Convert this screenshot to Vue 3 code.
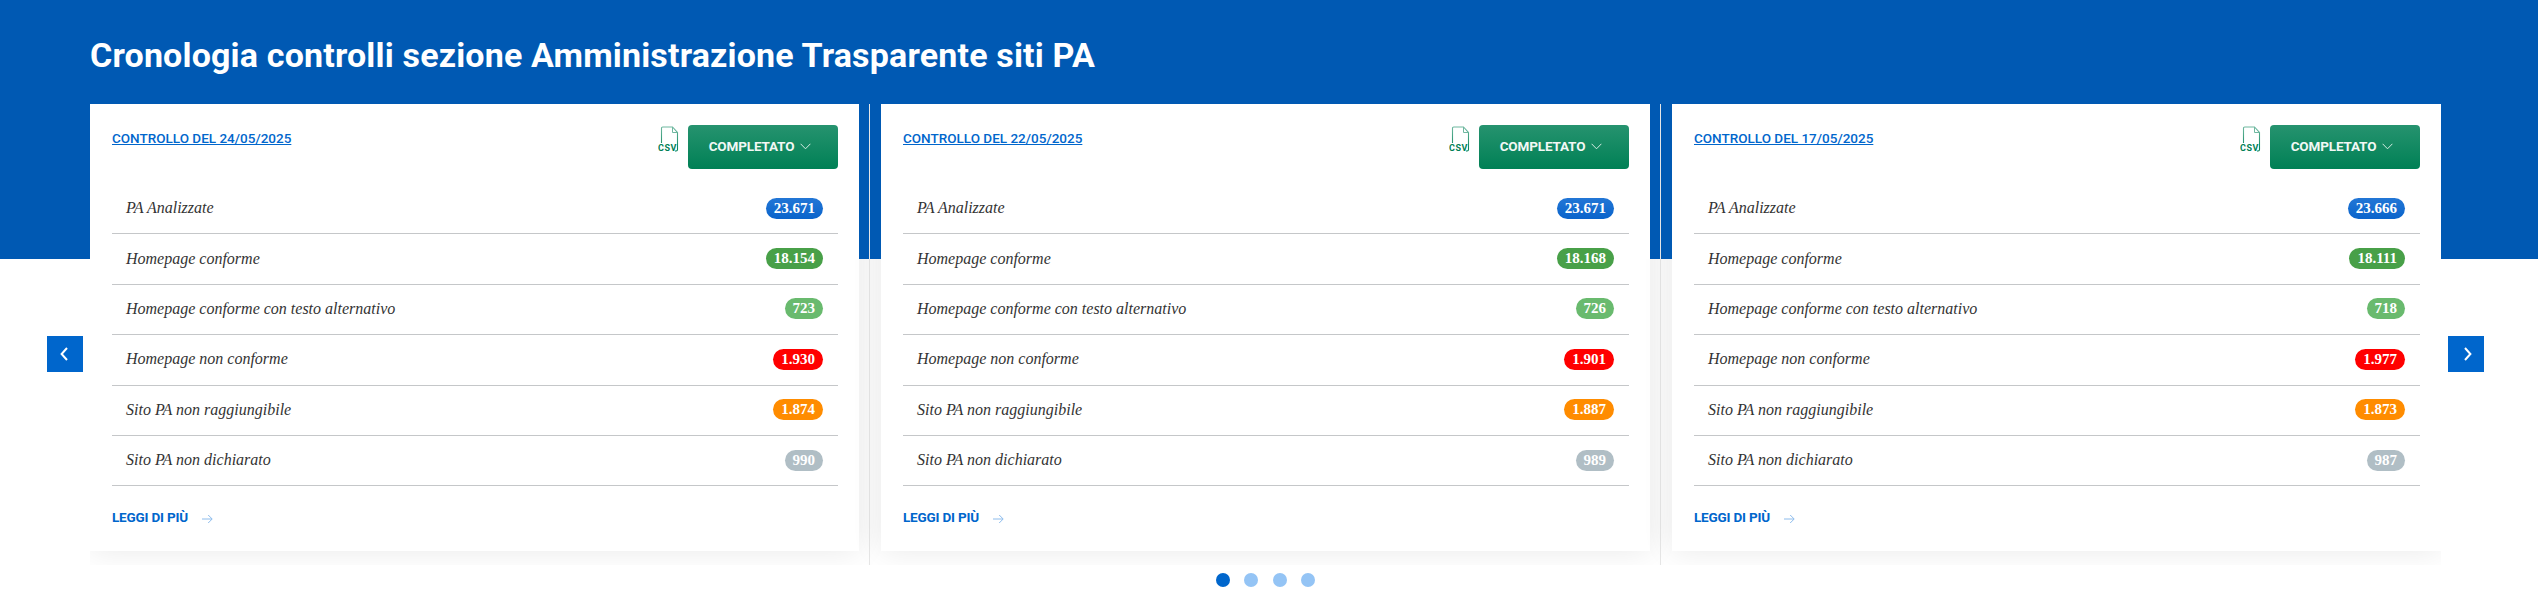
<script setup>
const makeRows = (v) => [
  { label: 'PA Analizzate', value: v[0], tone: 'blue' },
  { label: 'Homepage conforme', value: v[1], tone: 'green' },
  { label: 'Homepage conforme con testo alternativo', value: v[2], tone: 'lime' },
  { label: 'Homepage non conforme', value: v[3], tone: 'red' },
  { label: 'Sito PA non raggiungibile', value: v[4], tone: 'orange' },
  { label: 'Sito PA non dichiarato', value: v[5], tone: 'grey' },
]
const cards = [
  { date: '24/05/2025', rows: makeRows(['23.671', '18.154', '723', '1.930', '1.874', '990']) },
  { date: '22/05/2025', rows: makeRows(['23.671', '18.168', '726', '1.901', '1.887', '989']) },
  { date: '17/05/2025', rows: makeRows(['23.666', '18.111', '718', '1.977', '1.873', '987']) },
]
</script>

<template>
  <main class="page">
    <h1 class="title">Cronologia controlli sezione Amministrazione Trasparente siti PA</h1>
    <div class="viewport">
      <div class="track">
        <article v-for="card in cards" :key="card.date" class="slide">
          <div class="card">
            <header class="head">
              <a class="date" href="#">CONTROLLO DEL {{ card.date }}</a>
              <div class="actions">
                <svg class="csv" width="21" height="26" viewBox="0 0 21 26" fill="none">
                  <defs>
                    <linearGradient id="csvg" x1="0" y1="0" x2="0" y2="1">
                      <stop offset="0" stop-color="#6fb8a0" />
                      <stop offset="1" stop-color="#008055" />
                    </linearGradient>
                  </defs>
                  <path d="M3.5 17V2.2Q3.5 1 4.7 1H14.5L19.5 6.5V23.5Q19.5 25 18 25H17" stroke="url(#csvg)" stroke-width="1.1" />
                  <path d="M14.5 1V6.5H19.5" stroke="#6fb8a0" stroke-width="1" />
                  <text x="0" y="25" class="csv-text">CSV</text>
                </svg>
                <button class="status" type="button">
                  COMPLETATO
                  <svg width="11" height="7" viewBox="0 0 11 7" fill="none"><path d="M.6.8 5.5 5.8 10.4.8" stroke="#d5ebe2" stroke-width="1" /></svg>
                </button>
              </div>
            </header>
            <ul class="rows">
              <li v-for="row in card.rows" :key="row.label" class="row">
                <span class="label">{{ row.label }}</span>
                <span class="badge" :class="row.tone">{{ row.value }}</span>
              </li>
            </ul>
            <a class="more" href="#">
              LEGGI DI PIÙ
              <svg class="arrow" width="11" height="10" viewBox="0 0 11 10" fill="none"><path d="M0 5H10M6.2 1 10.2 5 6.2 9" stroke="#8dbcec" stroke-width="1" /></svg>
            </a>
          </div>
        </article>
      </div>
    </div>
    <div class="dots">
      <span class="dot on"></span><span class="dot"></span><span class="dot"></span><span class="dot"></span>
    </div>
    <button class="nav prev" type="button" aria-label="Precedente">
      <svg width="10" height="14" viewBox="0 0 10 14" fill="none"><path d="M8 1 2.6 7 8 13" stroke="#fff" stroke-width="2" /></svg>
    </button>
    <button class="nav next" type="button" aria-label="Successivo">
      <svg width="10" height="14" viewBox="0 0 10 14" fill="none"><path d="M2 1 7.4 7 2 13" stroke="#fff" stroke-width="2" /></svg>
    </button>
  </main>
</template>

<style>
html, body { margin: 0; background: #fff; }
</style>

<style scoped>
.page {
  position: relative;
  width: 2538px;
  height: 616px;
  overflow: hidden;
  box-sizing: border-box;
  padding: 0 0 0 90px;
  background: linear-gradient(#0059b3 0, #0059b3 259px, #fff 259px);
  font-family: Roboto, "Liberation Sans", sans-serif;
}
.title {
  margin: 0;
  height: 104px;
  box-sizing: border-box;
  padding-top: 33px;
  color: #fff;
  font-size: 34px;
  line-height: 44px;
  font-weight: 700;
  letter-spacing: .17px;
  white-space: nowrap;
}
.viewport {
  width: 2351px;
  height: 461px;
  overflow: hidden;
}
.track {
  display: flex;
  gap: 22px;
}
.slide {
  position: relative;
  width: 769px;
  height: 461px;
  flex: none;
  isolation: isolate;
}
.slide:not(:last-child)::after {
  content: "";
  position: absolute;
  top: 0;
  bottom: 0;
  right: -11px;
  width: 1px;
  background: #e6e6e6;
}
.card {
  position: relative;
  box-sizing: border-box;
  height: 447px;
  padding: 21px 21px 0 22px;
  background: #fff;
}
.card::before {
  content: "";
  position: absolute;
  inset: 0;
  z-index: -1;
  box-shadow: 0 0 30px rgba(0, 0, 0, .09);
  clip-path: inset(155px -30px -30px -30px);
}
.head {
  display: flex;
  justify-content: space-between;
  align-items: flex-start;
  height: 59px;
}
.date {
  margin-top: 5px;
  color: #0066cc;
  font-size: 13.5px;
  font-weight: 500;
  line-height: 16px;
  text-decoration: underline;
}
.actions {
  display: flex;
  align-items: flex-start;
  gap: 9px;
}
.csv { margin-top: 1px; }
.csv-text {
  font-family: Roboto, sans-serif;
  font-size: 9px;
  font-weight: 700;
  letter-spacing: .5px;
  fill: #008055;
}
.status {
  display: flex;
  align-items: center;
  justify-content: center;
  gap: 6px;
  width: 150px;
  height: 44px;
  padding: 0 6px 2px 0;
  border: 0;
  border-radius: 4px;
  background: linear-gradient(#26936f, #008055);
  color: #f2f8f5;
  font-family: inherit;
  font-size: 13.5px;
  font-weight: 700;
  letter-spacing: -.15px;
}
.rows {
  margin: 0;
  padding: 0;
  list-style: none;
}
.row {
  display: flex;
  align-items: center;
  justify-content: space-between;
  box-sizing: border-box;
  height: 50.4px;
  padding: 0 15px 1px 14px;
  border-bottom: 1px solid #c5c7c9;
}
.label {
  color: #333;
  font-family: "Liberation Serif", serif;
  font-style: italic;
  font-size: 16px;
}
.badge {
  box-sizing: border-box;
  height: 21px;
  padding: 0 8px;
  border-radius: 11px;
  color: #fff;
  font-family: "Liberation Serif", serif;
  font-size: 15px;
  font-weight: 700;
  line-height: 21px;
}
.blue { background: linear-gradient(#2276d6, #0a64cb); }
.green { background: #48a048; }
.lime { background: #69ba6e; }
.red { background: #ff0000; }
.orange { background: #ff8c00; }
.grey { background: #b0bec5; }
.more {
  display: inline-flex;
  align-items: center;
  gap: 14px;
  margin-top: 21px;
  color: #0066cc;
  font-size: 13.5px;
  line-height: 20px;
  font-weight: 700;
  letter-spacing: -.2px;
  text-decoration: none;
}
.arrow { margin-top: 3px; }
.dots {
  display: flex;
  justify-content: center;
  gap: 14.6px;
  width: 2351px;
  margin: 8px 0 0 -1px;
  padding-left: 2px;
  box-sizing: border-box;
}
.dot {
  width: 14px;
  height: 14px;
  border-radius: 50%;
  background: #94c4f5;
}
.dot.on { background: #0066cc; }
.nav {
  position: absolute;
  top: 336px;
  display: flex;
  align-items: center;
  justify-content: center;
  width: 36px;
  height: 36px;
  padding: 0;
  border: 0;
  background: #0066cc;
}
.prev { left: 47px; padding-right: 3px; }
.next { left: 2448px; padding-left: 3px; }
</style>
